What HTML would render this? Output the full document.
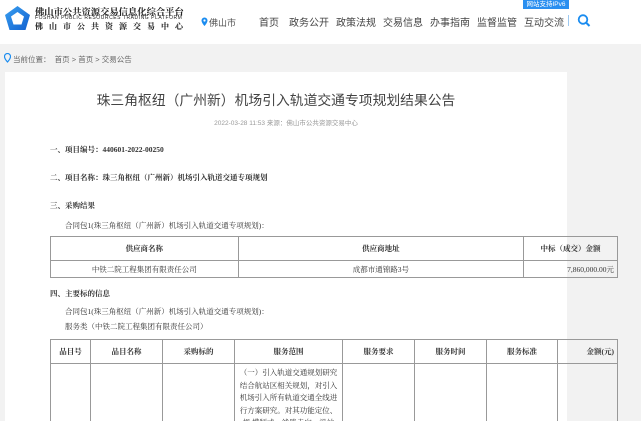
<!DOCTYPE html>
<html><head><meta charset="utf-8"><style>
*{margin:0;padding:0;box-sizing:border-box}
html,body{width:641px;height:426px;overflow:hidden}
body{background:#f2f2f2;font-family:"Liberation Sans","Noto Sans CJK SC",sans-serif;position:relative;color:#333}
.a{position:absolute;white-space:nowrap}
.hdr{position:absolute;left:0;top:0;width:641px;height:44px;background:#fff}
.panel{position:absolute;left:5px;top:72px;width:562px;height:354px;background:#fff}
.serif{font-family:"Liberation Serif","Noto Serif CJK SC",serif}
.nav{font-size:10px;color:#444;top:14px}
table{position:absolute;border-collapse:collapse;font-family:"Liberation Serif","Noto Serif CJK SC",serif;font-size:7.5px;color:#333}
td{border:1px solid #999;text-align:center}
</style></head><body>
<div class="hdr"></div>
<svg class="a" style="left:4px;top:5px" width="27" height="26" viewBox="0 0 27 26"><defs><linearGradient id="g" x1="0" y1="0" x2="1" y2="1"><stop offset="0" stop-color="#3aa0f0"/><stop offset="1" stop-color="#1060d0"/></linearGradient></defs><path d="M13.5 1 L26 10 L21.5 25 L5.5 25 L1 10 Z" fill="url(#g)"/><path d="M13.5 7 L20 11.5 L17.5 19.5 L9.5 19.5 L7 11.5 Z" fill="#fff"/></svg>
<div class="a serif" style="left:35px;top:4px;font-size:9.3px;font-weight:bold;color:#222">佛山市公共资源交易信息化综合平台</div>
<div class="a" style="left:35px;top:15px;font-size:5px;letter-spacing:0.55px;color:#222">FOSHAN PUBLIC RESOURCES TRADING PLATFORM</div>
<div class="a serif" style="left:35px;top:21px;font-size:8px;font-weight:bold;color:#222;letter-spacing:6px">佛山市公共资源交易中心</div>
<svg class="a" style="left:201px;top:17px" width="7" height="10" viewBox="0 0 7 10"><path d="M3.5 0.5a3 3 0 0 1 3 3c0 2.2-3 5.5-3 5.5s-3-3.3-3-5.5a3 3 0 0 1 3-3z" fill="#1a8cf0"/><circle cx="3.5" cy="3.5" r="1.1" fill="#fff"/></svg>
<div class="a" style="left:209px;top:16px;font-size:9px;color:#555">佛山市</div>
<div class="a nav" style="left:259px">首页</div>
<div class="a nav" style="left:289px">政务公开</div>
<div class="a nav" style="left:336px">政策法规</div>
<div class="a nav" style="left:383px">交易信息</div>
<div class="a nav" style="left:430px">办事指南</div>
<div class="a nav" style="left:477px">监督监管</div>
<div class="a nav" style="left:524px">互动交流</div>
<div class="a" style="left:568px;top:15px;width:1px;height:11px;background:#9cc8f0"></div>
<svg class="a" style="left:577px;top:14px" width="14" height="13" viewBox="0 0 14 13"><circle cx="6" cy="5.5" r="4.3" fill="none" stroke="#1a8cf0" stroke-width="1.8"/><path d="M9 8.5 L12.5 12" stroke="#1a8cf0" stroke-width="2"/></svg>
<div class="a" style="left:523px;top:0;width:46px;height:9px;background:#2a8ff0;color:#fff;font-size:6.5px;line-height:9px;text-align:center">网站支持IPv6</div>
<svg class="a" style="left:4px;top:53px" width="7" height="10" viewBox="0 0 7 10"><path d="M3.5 0.5a3 3 0 0 1 3 3c0 2.2-3 5.5-3 5.5s-3-3.3-3-5.5a3 3 0 0 1 3-3z" fill="none" stroke="#1a8cf0" stroke-width="1.2"/></svg>
<div class="a" style="left:13px;top:54px;font-size:7.5px;color:#666">当前位置：&nbsp; 首页 &gt; 首页 &gt; 交易公告</div>
<div class="panel"></div>
<div class="a" style="left:0;width:552px;text-align:center;top:89px;font-size:13.8px;color:#444">珠三角枢纽（广州新）机场引入轨道交通专项规划结果公告</div>
<div class="a" style="left:0;width:572px;text-align:center;top:117px;font-size:6.5px;color:#999">2022-03-28 11:53 来源：佛山市公共资源交易中心</div>
<div class="a serif" style="left:50px;top:144px;font-size:7.5px;font-weight:bold">一、项目编号：440601-2022-00250</div>
<div class="a serif" style="left:50px;top:172px;font-size:7.5px;font-weight:bold">二、项目名称：珠三角枢纽（广州新）机场引入轨道交通专项规划</div>
<div class="a serif" style="left:50px;top:200px;font-size:7.5px;font-weight:bold">三、采购结果</div>
<div class="a serif" style="left:65px;top:220px;font-size:7.5px">合同包1(珠三角枢纽（广州新）机场引入轨道交通专项规划)：</div>
<table style="left:50px;top:236px;width:568px">
<tr style="height:24px;font-weight:bold"><td style="width:188px">供应商名称</td><td style="width:286px">供应商地址</td><td style="width:94px">中标（成交）金额</td></tr>
<tr style="height:17px"><td>中铁二院工程集团有限责任公司</td><td>成都市通锦路3号</td><td style="text-align:right;padding-right:3px">7,860,000.00元</td></tr>
</table>
<div class="a serif" style="left:50px;top:288px;font-size:7.5px;font-weight:bold">四、主要标的信息</div>
<div class="a serif" style="left:65px;top:306px;font-size:7.5px">合同包1(珠三角枢纽（广州新）机场引入轨道交通专项规划)：</div>
<div class="a serif" style="left:65px;top:321px;font-size:7.5px">服务类（中铁二院工程集团有限责任公司）</div>
<table style="left:50px;top:339px;width:568px">
<tr style="height:24px;font-weight:bold"><td style="width:40px">品目号</td><td style="width:72px">品目名称</td><td style="width:72px">采购标的</td><td style="width:108px">服务范围</td><td style="width:72px">服务要求</td><td style="width:72px">服务时间</td><td style="width:71px">服务标准</td><td style="text-align:right;padding-right:3px">金额(元)</td></tr>
<tr style="height:80px"><td></td><td></td><td></td><td style="vertical-align:top;padding:3px 4px;line-height:12.5px;font-size:7.5px;white-space:normal">（一）引入轨道交通规划研究结合航站区相关规划，对引入机场引入所有轨道交通全线进行方案研究。对其功能定位、规 模制式、线路走向、设站</td><td></td><td></td><td></td><td></td></tr>
</table>
<div class="a" style="left:0;top:421px;width:641px;height:5px;background:#fff"></div>
</body></html>
